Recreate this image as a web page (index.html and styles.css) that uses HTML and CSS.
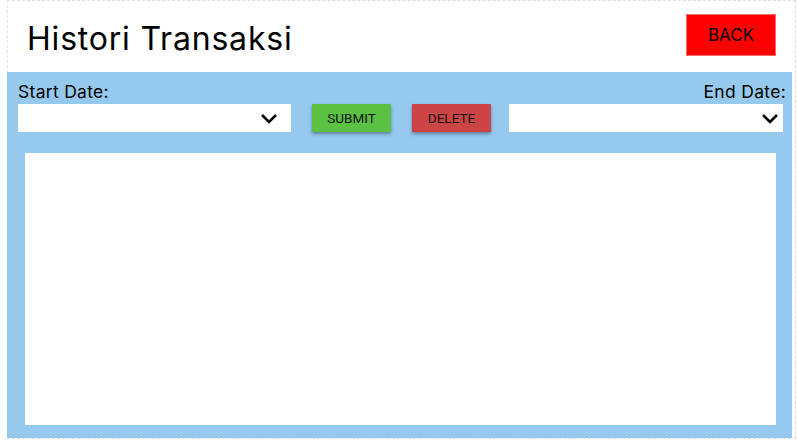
FILE: index.html
```html
<!DOCTYPE html>
<html>
<head>
<meta charset="utf-8">
<link rel="stylesheet" href="styles.css">
</head>
<body>
<div class="page">
  <header class="header">
    <h1 class="title">Histori Transaksi</h1>
    <button class="back">BACK</button>
  </header>
  <section class="panel">
    <div class="controls">
      <div class="field">
        <label class="label">Start Date:</label>
        <div class="select">
          <svg class="chev" width="18" height="12" viewBox="0 0 18 12"><path d="M2 2 L9 9 L16 2" fill="none" stroke="#000" stroke-width="2.6"/></svg>
        </div>
      </div>
      <button class="btn submit">SUBMIT</button>
      <button class="btn delete">DELETE</button>
      <div class="field end">
        <label class="label">End Date:</label>
        <div class="select">
          <svg class="chev" width="18" height="12" viewBox="0 0 18 12"><path d="M2 2 L9 9 L16 2" fill="none" stroke="#000" stroke-width="2.6"/></svg>
        </div>
      </div>
    </div>
    <div class="table"></div>
  </section>
</div>
</body>
</html>
```
FILE: styles.css
```css
html, body {
  margin: 0;
  padding: 0;
  background: #fff;
}
body {
  font-family: Inter, "Noto Sans", sans-serif;
  width: 797px;
  height: 442px;
  overflow: hidden;
}
.page {
  margin-left: 7px;
  width: 789px;
  height: 439px;
  border-top: 1px dashed #ddd;
  border-right: 1px dashed #ddd;
  border-bottom: 1px dashed #ddd;
  border-left: 1px dashed #e4e4e4;
  box-sizing: border-box;
  display: flex;
  flex-direction: column;
}
.header {
  height: 71px;
  display: flex;
  align-items: flex-start;
  justify-content: space-between;
  padding: 0 19px 0 19px;
}
.title {
  margin: 0;
  margin-top: 18px;
  font-weight: 400;
  font-size: 32px;
  line-height: 40px;
  letter-spacing: 0.8px;
  color: #000;
}
.back {
  width: 90px;
  height: 42px;
  background: #ff0000;
  border: 1px solid #ff6a6a;
  color: #000;
  font-family: Inter, "Noto Sans", sans-serif;
  font-size: 17px;
  padding: 0;
  margin-top: 13px;
}
.panel {
  margin-left: -1px;
  margin-right: 3px;
  background: #96c9ee;
  flex: 1;
  padding: 9px 5px 13px 11px;
  display: flex;
  flex-direction: column;
}
.controls {
  display: flex;
  align-items: flex-end;
}
.field {
  display: flex;
  flex-direction: column;
  width: 273px;
}
.field.end {
  width: 274px;
  margin-left: 18px;
}
.label {
  font-size: 17.5px;
  line-height: 21px;
  letter-spacing: 0.3px;
  color: #000;
  margin-bottom: 2px;
}
.end .label {
  text-align: right;
  margin-right: -3px;
}
.select {
  height: 28px;
  background: #fff;
  display: flex;
  align-items: center;
  justify-content: flex-end;
  padding-right: 13px;
  box-sizing: border-box;
}
.end .select {
  padding-right: 4px;
}
.chev {
  display: block;
  margin-top: 1px;
}
.btn {
  width: 79px;
  height: 28px;
  border: none;
  padding: 0;
  font-family: Roboto, "Liberation Sans", sans-serif;
  font-size: 13.5px;
  color: #111;
  box-shadow: 0 2px 3px rgba(0,0,0,0.35);
  margin-left: 21px;
}
.submit {
  background: #5ac143;
}
.delete {
  background: #cd4444;
}
.table {
  background: #fff;
  margin: 21px 11px 0 7px;
  flex: 1;
}
```
